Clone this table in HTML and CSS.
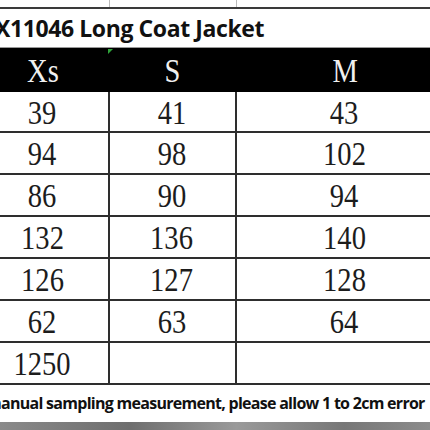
FILE: index.html
```html
<!DOCTYPE html>
<html lang="en">
<head>
    <meta charset="UTF-8">
    <meta name="viewport" content="width=device-width, initial-scale=1.0">
    <title>X11046 Long Coat Jacket - Size Chart</title>
    <link rel="stylesheet" href="styles.css">
</head>
<body>
    <div class="sheet">
        <!-- bottom of the table above, cut off -->
        <div class="top-strip">
            <div class="cell"></div>
            <div class="cell"></div>
            <div class="cell"></div>
        </div>

        <h1 class="title">X11046 Long Coat Jacket</h1>

        <div class="size-table">
            <div class="row head">
                <div class="cell"><span>Xs</span></div>
                <div class="cell"><span>S</span><i class="marker"></i></div>
                <div class="cell"><span>M</span></div>
            </div>
            <div class="row">
                <div class="cell"><span>39</span></div>
                <div class="cell"><span>41</span></div>
                <div class="cell"><span>43</span></div>
            </div>
            <div class="row">
                <div class="cell"><span>94</span></div>
                <div class="cell"><span>98</span></div>
                <div class="cell"><span>102</span></div>
            </div>
            <div class="row">
                <div class="cell"><span>86</span></div>
                <div class="cell"><span>90</span></div>
                <div class="cell"><span>94</span></div>
            </div>
            <div class="row">
                <div class="cell"><span>132</span></div>
                <div class="cell"><span>136</span></div>
                <div class="cell"><span>140</span></div>
            </div>
            <div class="row">
                <div class="cell"><span>126</span></div>
                <div class="cell"><span>127</span></div>
                <div class="cell"><span>128</span></div>
            </div>
            <div class="row">
                <div class="cell"><span>62</span></div>
                <div class="cell"><span>63</span></div>
                <div class="cell"><span>64</span></div>
            </div>
            <div class="row">
                <div class="cell"><span>1250</span></div>
                <div class="cell"></div>
                <div class="cell"></div>
            </div>
        </div>

        <p class="note">manual sampling measurement, please allow 1 to 2cm error</p>
        <div class="bottom-strip"></div>
    </div>
</body>
</html>
```

FILE: styles.css
```css
* {
    margin: 0;
    padding: 0;
    box-sizing: border-box;
}

body {
    background-color: #fff;
    overflow: hidden;
    width: 430px;
    height: 430px;
}

.sheet {
    width: 430px;
    height: 430px;
    overflow: hidden;
    position: relative;
}

/* leftover bit of the chart above */
.top-strip {
    display: grid;
    grid-template-columns: 134px 127px 216px;
    margin-left: -24px;
    height: 9px;
    border-bottom: 2px solid #3a3a3a;
}

.top-strip .cell {
    border-right: 1px solid #bbb;
}

.title {
    font-family: "Open Sans", sans-serif;
    font-weight: 700;
    font-size: 23px;
    letter-spacing: -0.4px;
    color: #111;
    height: 39px;
    line-height: 39px;
    margin-left: -5px;
    white-space: nowrap;
    border-bottom: 1px solid #999;
}

.size-table {
    margin-left: -24px;
    width: 477px;
}

.row {
    display: grid;
    grid-template-columns: 134px 127px 216px;
    height: 42px;
    border-bottom: 2px solid #2e2e2e;
}

.row .cell {
    position: relative;
    display: flex;
    align-items: center;
    justify-content: center;
    border-right: 2px solid #2e2e2e;
}

.row .cell:nth-child(2) {
    margin-left: -2px;
}

.cell span {
    display: inline-block;
    font-family: "Liberation Serif", serif;
    font-size: 34px;
    line-height: 1;
    color: #1c1c1c;
    transform: scaleX(0.84);
    padding-top: 2px;
}

.row.head {
    background: #000;
    height: 44px;
    border-bottom: none;
}

.row.head .cell {
    border-right: none;
}

.row.head .cell span {
    color: #f0f0f0;
}

.row.head + .row {
    height: 41px;
}

/* little green comment mark */
.marker {
    position: absolute;
    top: 1px;
    left: 0;
    width: 0;
    height: 0;
    border-top: 5px solid #2fa33a;
    border-right: 5px solid transparent;
}

.note {
    font-family: "Open Sans", sans-serif;
    font-weight: 700;
    font-size: 16px;
    color: #111;
    white-space: nowrap;
    margin-left: -14px;
    height: 37px;
    line-height: 36px;
    letter-spacing: -0.72px;
}

.bottom-strip {
    height: 10px;
    background: linear-gradient(90deg, #8a8a8a, #6e6e6e 30%, #9a9a9a 55%, #777 80%, #8c8c8c);
}
```
